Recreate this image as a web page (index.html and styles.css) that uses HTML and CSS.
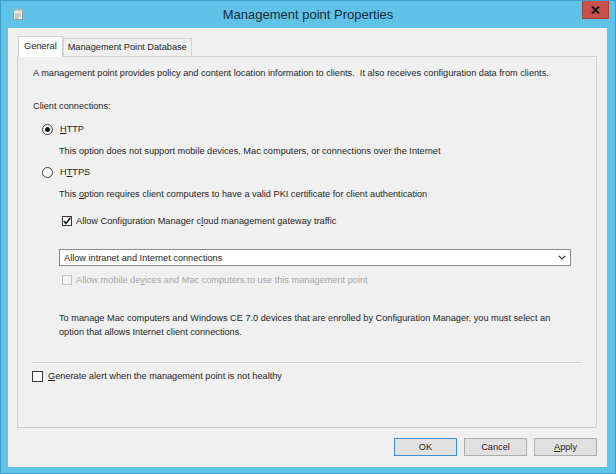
FILE: index.html
```html
<!DOCTYPE html>
<html>
<head>
<meta charset="utf-8">
<link rel="stylesheet" href="styles.css">
</head>
<body>
<div class="window">
  <div class="titlebar">
    <div class="tb-left">
      <svg class="app-icon" width="10" height="11" viewBox="0 0 10 11">
        <rect x="0.5" y="0.5" width="9" height="10" fill="#f4f4f4" stroke="#9a9a9a"/>
        <rect x="0.5" y="0.5" width="9" height="2" fill="#c9c9c9"/>
        <line x1="2" y1="5" x2="8" y2="5" stroke="#9a9a9a"/>
        <line x1="2" y1="7" x2="8" y2="7" stroke="#9a9a9a"/>
        <line x1="2" y1="9" x2="6" y2="9" stroke="#9a9a9a"/>
      </svg>
    </div>
    <div class="title">Management point Properties</div>
    <div class="tb-right">
      <div class="close">
        <svg width="9" height="8" viewBox="0 0 9 8">
          <path d="M1 0.5 L8 7.5 M8 0.5 L1 7.5" stroke="#1a1a1a" stroke-width="2"/>
        </svg>
      </div>
    </div>
  </div>
  <div class="client">
    <div class="tabs">
      <div class="tab active">General</div>
      <div class="tab">Management Point Database</div>
    </div>
    <div class="panel">
      <div class="p1">A management point provides policy and content location information to clients.&nbsp; It also receives configuration data from clients.</div>
      <div class="conn">Client connections:</div>
      <div class="row radio-row r-http"><span class="radio checked"></span><span><u>H</u>TTP</span></div>
      <div class="desc d1">This option does not support mobile devices, Mac computers, or connections over the Internet</div>
      <div class="row radio-row r-https"><span class="radio"></span><span>H<u>T</u>TPS</span></div>
      <div class="desc d2">This <u>o</u>ption requires client computers to have a valid PKI certificate for client authentication</div>
      <div class="row check-row c-cloud"><span class="check checked">
        <svg width="10" height="10" viewBox="0 0 10 10"><path d="M1.8 5 L4 7.4 L8.4 1.8" fill="none" stroke="#1a1a1a" stroke-width="1.6"/></svg>
      </span><span>Allow Configuration Manager c<u>l</u>oud management gateway traffic</span></div>
      <div class="select">
        <span>Allow intranet and Internet connections</span>
        <svg width="8" height="5" viewBox="0 0 8 5"><path d="M0.8 0.8 L4 4 L7.2 0.8" fill="none" stroke="#333" stroke-width="1.2"/></svg>
      </div>
      <div class="row check-row c-mobile disabled"><span class="check"></span><span>Allow mobile de<u>v</u>ices and Mac computers to use this management point</span></div>
      <div class="note">To manage Mac computers and Windows CE 7.0 devices that are enrolled by Configuration Manager, you must select an option that allows Internet client connections.</div>
      <div class="sep"></div>
      <div class="row check-row c-alert"><span class="check"></span><span><u>G</u>enerate alert when the management point is not healthy</span></div>
    </div>
    <div class="buttons">
      <div class="btn default">OK</div>
      <div class="btn">Cancel</div>
      <div class="btn"><u>A</u>pply</div>
    </div>
  </div>
</div>
</body>
</html>
```
FILE: styles.css
```css
* { box-sizing: border-box; }
html, body { margin: 0; padding: 0; }
body {
  width: 616px;
  height: 474px;
  overflow: hidden;
  font-family: "Liberation Sans", Arial, sans-serif;
  font-size: 9.2px;
  color: #1e1e1e;
  background: #5fc3e8;
}
.window {
  width: 616px;
  height: 474px;
  display: flex;
  flex-direction: column;
  background: #5fc3e8;
  border: 1px solid #3f9fc8;
}
.titlebar {
  height: 27px;
  display: grid;
  grid-template-columns: 1fr auto 1fr;
  align-items: start;
}
.tb-left { padding: 8px 0 0 12px; }
.app-icon { display: block; }
.title {
  font-size: 13px;
  line-height: 15px;
  padding-top: 6px;
  color: #1b2b36;
}
.tb-right { display: flex; justify-content: flex-end; padding-right: 6px; }
.close {
  width: 27px;
  height: 18px;
  background: #c7504a;
  border: 1px solid #a8423d;
  border-top: none;
  display: flex;
  align-items: center;
  justify-content: center;
}
.close svg { display: block; }
.client {
  flex: 1;
  margin: 0 8px 6px 7px;
  background: #f0f0f0;
  display: flex;
  flex-direction: column;
  padding-top: 8px;
}
.tabs {
  display: flex;
  align-items: flex-end;
  height: 20px;
  margin-left: 10px;
}
.tab {
  height: 18px;
  line-height: 16px;
  padding: 0 4px;
  border: 1px solid #d4d4d4;
  border-bottom: none;
  background: #f0f0f0;
  white-space: nowrap;
}
.tab.active {
  height: 21px;
  margin-bottom: -1px;
  line-height: 18px;
  padding: 0 5px;
  background: #ffffff;
  position: relative;
  z-index: 1;
  border-color: #d0d0d0;
}
.panel {
  margin: 0 10px 0 9px;
  height: 372px;
  border: 1px solid #d3d3d3;
  border-bottom-color: #c9c9c9;
  background: #f0f0f0;
  padding: 0 15px;
  display: flex;
  flex-direction: column;
  line-height: 14px;
  white-space: nowrap;
}
.p1 { margin-top: 9px; }
.conn { margin-top: 19px; }
.row { display: flex; align-items: center; height: 14px; }
.radio-row { padding-left: 9px; gap: 7px; }
.r-http { margin-top: 9px; }
.desc { padding-left: 26px; }
.d1 { margin-top: 8px; }
.r-https { margin-top: 7px; }
.d2 { margin-top: 8px; }
.radio {
  width: 11px;
  height: 11px;
  border: 1px solid #3a3a3a;
  border-radius: 50%;
  background: #fff;
  display: flex;
  align-items: center;
  justify-content: center;
}
.radio.checked::after {
  content: "";
  width: 5px;
  height: 5px;
  border-radius: 50%;
  background: #1a1a1a;
}
.check-row { padding-left: 29px; gap: 4px; }
.check {
  width: 10px;
  height: 10px;
  border: 1px solid #3a3a3a;
  background: #fff;
  display: flex;
  align-items: center;
  justify-content: center;
  flex: none;
}
.check svg { display: block; margin: -1px; }
.c-cloud { margin-top: 13px; }
.select {
  margin-top: 21px;
  margin-left: 26px;
  width: 512px;
  height: 17px;
  border: 1px solid #8a8a8a;
  background: #fff;
  display: flex;
  align-items: center;
  justify-content: space-between;
  padding: 0 4px 0 4px;
}
.select svg { display: block; margin-right: 0px; }
.c-mobile { margin-top: 7px; }
.disabled { color: #a6a6a6; }
.disabled .check { border-color: #c2c2c2; background: #f4f4f4; }
.note { margin-top: 24px; padding-left: 26px; white-space: normal; width: 526px; }
.sep {
  margin-top: 23px;
  margin-left: -1px;
  margin-right: -1px;
  height: 2px;
  border-top: 1px solid #d2d2d2;
  border-bottom: 1px solid #fafafa;
}
.c-alert { margin-top: 5px; padding-left: 0; margin-left: -1px; gap: 5px; }
.c-alert .check { width: 11px; height: 11px; }
.buttons {
  display: flex;
  justify-content: flex-end;
  gap: 7px;
  margin-top: 10px;
  padding-right: 10px;
}
.btn {
  width: 63px;
  height: 18px;
  border: 1px solid #adadad;
  background: #e1e1e1;
  text-align: center;
  line-height: 16px;
}
.btn.default { border-color: #3c8fd0; }
u { text-decoration: underline; text-underline-offset: 1px; }
```
